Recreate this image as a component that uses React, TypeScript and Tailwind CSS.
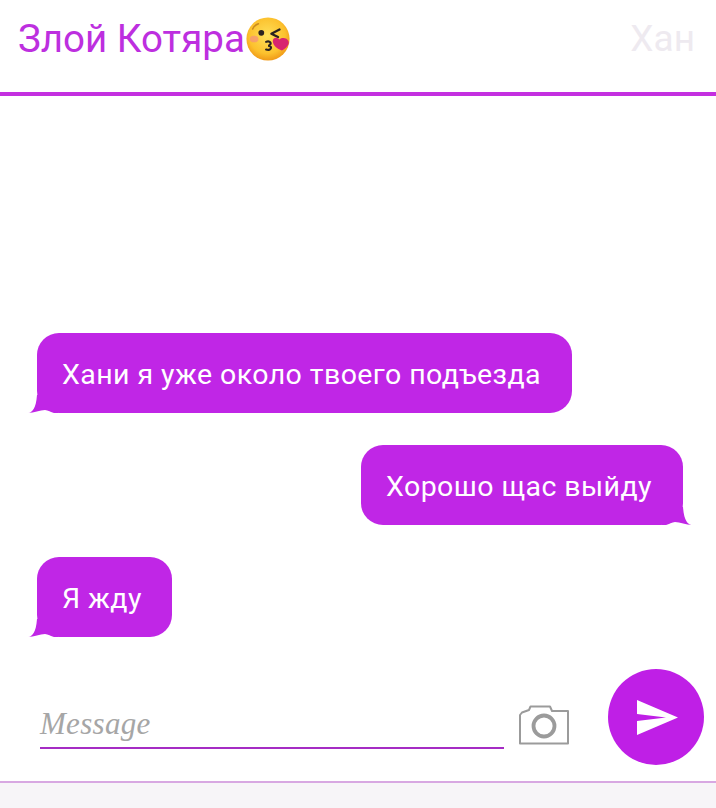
const font = { fontFamily: "Roboto, 'Liberation Sans', sans-serif" };

function KissEmoji() {
  return (
    <svg viewBox="0 0 48 48" className="h-[46px] w-[46px] shrink-0">
      <defs>
        <radialGradient id="face" cx="48%" cy="42%" r="58%">
          <stop offset="0%" stopColor="#fee05a" />
          <stop offset="72%" stopColor="#fcc12d" />
          <stop offset="100%" stopColor="#f09a18" />
        </radialGradient>
      </defs>
      <circle cx="24" cy="24" r="22.5" fill="url(#face)" />
      <ellipse cx="9.500" cy="24" rx="4.500" ry="3.500" fill="#f5937a" opacity="0.75" />
      <path d="M8 13.500c1-2.500 3-4.500 6-5.500" stroke="#c98a1e" strokeWidth="1.600" fill="none" strokeLinecap="round" />
      <circle cx="17" cy="17.500" r="3" fill="#2a2320" />
      <path d="M36 14l-8.500 4.500 7 3.500" stroke="#2a2320" strokeWidth="2.400" fill="none" strokeLinecap="round" strokeLinejoin="round" />
      <path d="M22 27c3-1.500 5.500 .5 4.500 2.500-.6 1.200-2 1.500-2.500 1.500 3 0 4 2 2.500 3.500-1.300 1.300-3 1-4.500 .5" stroke="#2a2320" strokeWidth="2.200" fill="none" strokeLinecap="round" />
      <path d="M38.500 36c-5-2-9-5-9.500-9.500-.4-3.500 4-5.500 7-2 2.500-2.500 8-2 9.500 2 1.200 3.800-3 7-7 9.500z" fill="#d8246f" />
    </svg>
  );
}

function Tail({ side }: { side: "left" | "right" }) {
  return (
    <svg
      viewBox="0 0 30 20"
      className={
        side === "left"
          ? "absolute bottom-0 left-[-9px] h-5 w-[30px]"
          : "absolute bottom-0 right-[-9px] h-5 w-[30px] -scale-x-100"
      }
    >
      <path d="M0 20C4 19.500 8 16 9 2L30 2 30 20 26 20C23 19.500 20 17 17 17 12 17 6 20 0 20Z" fill="#c026e6" />
    </svg>
  );
}

function Bubble({ text, side, className }: { text: string; side: "left" | "right"; className: string }) {
  return (
    <div className={`relative flex h-20 items-center rounded-[22px] bg-[#c026e6] pl-[25px] pt-1 text-[28.5px] tracking-[0.43px] text-white ${className}`}>
      <Tail side={side} />
      <span className="relative">{text}</span>
    </div>
  );
}

export default function App() {
  return (
    <div style={font} className="flex h-[808px] w-[716px] flex-col overflow-hidden bg-white">
      <header className="flex h-24 shrink-0 items-center justify-between border-b-4 border-[#c42fe0] pb-[14px] pl-[18px] pr-[21px]">
        <div className="flex items-center text-[38.5px] text-[#bd2fdf]">
          Злой Котяра
          <KissEmoji />
        </div>
        <span className="text-[37px] text-[#eeeaf0]">Хан</span>
      </header>

      <main className="flex flex-1 flex-col justify-end pb-[31px] pl-[37px] pr-[33px]">
        <div className="flex flex-col gap-8">
          <Bubble side="left" text="Хани я уже около твоего подъезда" className="w-[535px]" />
          <Bubble side="right" text="Хорошо щас выйду" className="w-[322px] self-end" />
          <Bubble side="left" text="Я жду" className="w-[135px]" />
        </div>
      </main>

      <div className="flex h-[113px] shrink-0 items-start pl-10 pr-3">
        <div
          style={{ fontFamily: "'Liberation Serif', serif" }}
          className="mt-[24px] flex h-[57px] w-[464px] items-center border-b-2 border-[#a52cc4] pt-[10px] text-[31px] italic tracking-[0.3px] text-[#a6a6a6]"
        >
          Message
        </div>
        <svg viewBox="0 0 50 40" fill="none" stroke="#9b9b9b" className="ml-[15px] mt-[37px] h-10 w-[50px]">
          <path d="M1 38.500V10l2-2.500 7-2.500 1.500-3.500h19.500l2 4.500h16v32.500z" strokeWidth="2" strokeLinejoin="round" />
          <circle cx="25" cy="21" r="10.500" strokeWidth="3.800" />
        </svg>
        <div className="ml-auto mt-px flex h-24 w-24 items-center justify-center rounded-full bg-[#bf1fe6]">
          <svg viewBox="0 0 41 35" className="ml-[2px] h-[35px] w-[41px]">
            <path d="M0 0L41 17.500 0 35V21L29 17.500 0 14Z" fill="#fff" />
          </svg>
        </div>
      </div>

      <footer className="h-[27px] shrink-0 border-t-2 border-[#d8a8e2] bg-[#f7f5f8]" />
    </div>
  );
}
